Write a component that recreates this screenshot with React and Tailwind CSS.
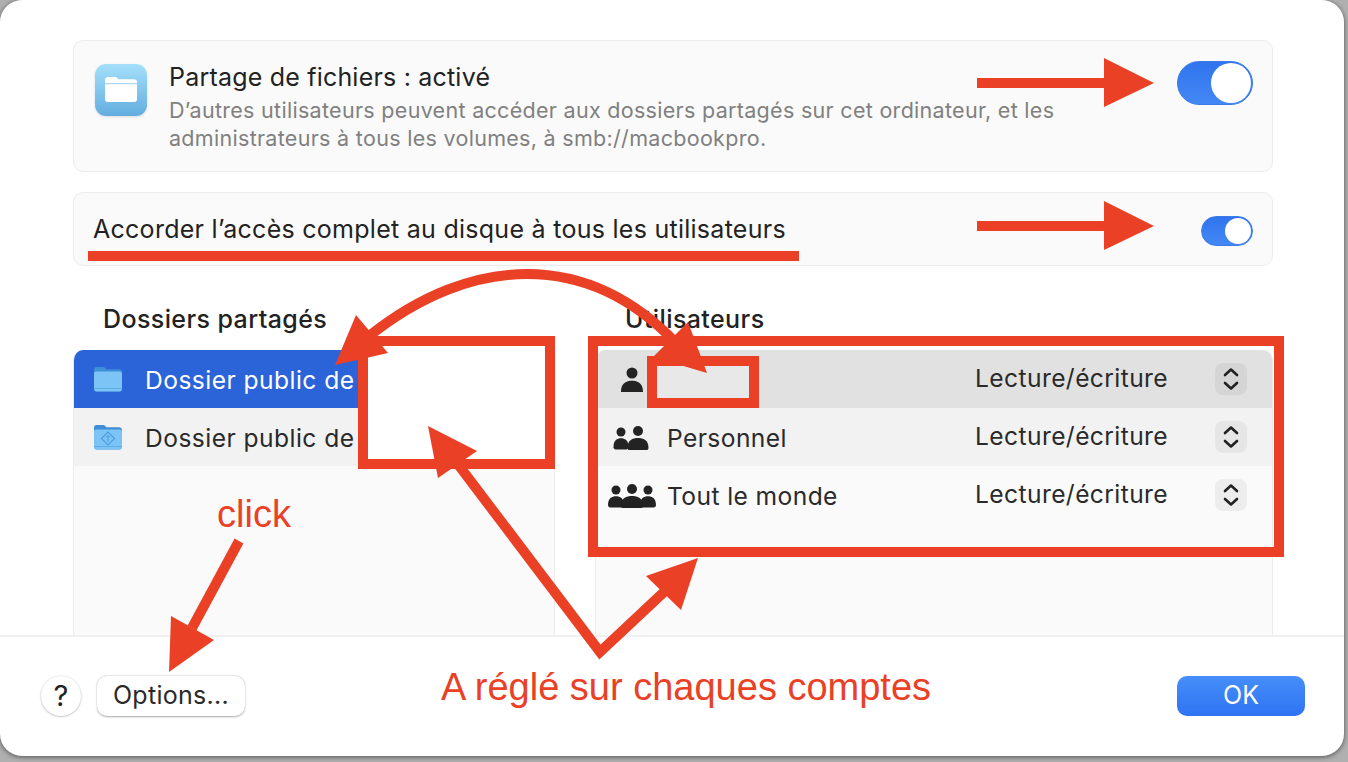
const RED = "#ea4025";

// ── toggle ──
function Toggle({ big }) {
  return (
    <div
      className={
        big
          ? "w-[76px] h-[44px] rounded-full bg-gradient-to-b from-[#2f74ee] to-[#4488f5] flex justify-end items-center pr-[1px] border border-[#3b7ce8]"
          : "w-[52px] h-[30px] rounded-full bg-gradient-to-b from-[#2f74ee] to-[#4488f5] flex justify-end items-center pr-[1px] border border-[#3b7ce8]"
      }
    >
      <div className={big ? "w-[40px] h-[40px] rounded-full bg-white" : "w-[26px] h-[26px] rounded-full bg-white"} />
    </div>
  );
}

function FolderIcon({ badge }) {
  return (
    <svg width="30" height="28" viewBox="0 0 30 28" className="shrink-0">
      <path d="M1 4.500C1 3 2 2 3.500 2h6.500c1 0 1.600.4 2.200 1l1.200 1.300H26c1.600 0 3 1.200 3 2.700V24c0 1.500-1 2.500-2.500 2.500h-23C2 26.500 1 25.500 1 24z" fill="#3f8fd6" />
      <path d="M1 8.500C1 7.400 1.800 6.500 3 6.500h24c1.200 0 2 .9 2 2V24c0 1.500-1 2.500-2.500 2.500h-23C2 26.500 1 25.500 1 24z" fill="#7cc4f5" />
      <rect x="1" y="23" width="28" height="1" fill="#5eaee8" />
      {badge && <path d="M15 9l6.500 6.500L15 22l-6.500-6.500z" fill="none" stroke="#4b9fe0" strokeWidth="1.200" />}
      {badge && <path d="M15 12.500v6M13 14.500l2-2 2 2" fill="none" stroke="#4b9fe0" strokeWidth="1" />}
    </svg>
  );
}

function Person({ cx, r, w, y }) {
  return (
    <g>
      <circle cx={cx} cy={y} r={r} fill="#232323" />
      <path d={`M${cx - w} ${y + r * 3.4}c0-${r * 1.6} ${w * 0.5}-${r * 2} ${w}-${r * 2}s${w} ${r * 0.4} ${w} ${r * 2}c0 ${r * 0.4}-${w * 0.2} ${r * 0.5}-${w * 0.4} ${r * 0.5}h-${w * 1.2}c-${w * 0.2} 0-${w * 0.4}-${r * 0.1}-${w * 0.4}-${r * 0.5}z`} fill="#232323" />
    </g>
  );
}

function UsersIcon({ count }) {
  return (
    <svg width="48" height="26" viewBox="0 0 48 26">
      {count === 1 && <Person cx={24} r={5.5} w={11} y={7} />}
      {count === 2 && (
        <>
          <Person cx={13} r={4.5} w={7.5} y={8} />
          <Person cx={30} r={5} w={10.5} y={7} />
        </>
      )}
      {count === 3 && (
        <>
          <Person cx={8} r={4.5} w={8} y={8} />
          <Person cx={40} r={4.5} w={8} y={8} />
          <Person cx={24} r={5} w={11} y={7} />
        </>
      )}
    </svg>
  );
}

function Stepper({ className }) {
  return (
    <div className={"w-[32px] h-[32px] rounded-[8px] " + className}>
      <svg width="32" height="32" viewBox="0 0 32 32" fill="none" stroke="#222" strokeWidth="2.6" strokeLinecap="round" strokeLinejoin="round">
        <path d="M10 12l6-5.500 6 5.500" />
        <path d="M10 20l6 5.500 6-5.500" />
      </svg>
    </div>
  );
}

function UserRow({ count, name, bg, stepper }) {
  return (
    <div className={"h-[58px] flex items-center " + bg}>
      <div className="w-[71px] flex justify-center">
        <UsersIcon count={count} />
      </div>
      <div className="w-[308px] text-[#2a2a2a] text-[24.6px] tracking-[0.4px] mt-[2px]">{name}</div>
      <div className="w-[240px] text-[#2a2a2a] text-[24.6px] tracking-[0.4px] -mt-[2px]">Lecture/écriture</div>
      <Stepper className={stepper} />
    </div>
  );
}

// ── annotations drawn over the dialog ──
function Annotations() {
  return (
    <svg width="1348" height="762" viewBox="0 0 1348 762" className="absolute left-0 top-0 pointer-events-none">
      <g fill={RED}>
        <path d="M977 78h127V58l50 25-50 24V88H977z" />
        <path d="M977 221h127v-20l50 25-50 24v-19H977z" />
        <rect x="88" y="251" width="711" height="10" />
        <path d="M169 672l2-56 43 24z" />
        <path d="M335 365l21-50 32 38z" />
        <path d="M707 373l-19-51-35 35z" />
        <path d="M428 426l49 25-39 27z" />
        <path d="M698 558l-52 18 35 34z" />
      </g>
      <g fill="none" stroke={RED} strokeWidth="10">
        <path d="M239 541L192 628" />
        <path d="M368 337C420 295 475 274 527 274C585 274 635 300 675 342" />
        <path d="M457 463L600 652L664 592" strokeMiterlimit="10" />
      </g>
    </svg>
  );
}

export default function App() {
  return (
    <div className="relative w-[1348px] h-[762px] overflow-hidden bg-[#b0b0b0] font-['Inter','Liberation_Sans',sans-serif]">
      {/* dialog */}
      <div className="w-[1344px] h-[756px] bg-white rounded-[22px] shadow-[0_1px_5px_rgba(0,0,0,0.55)] flex flex-col">
        <div className="flex-1 min-h-0 pl-[73px] pt-[40px] pr-[71px] flex flex-col">
          {/* sharing card */}
          <div className="h-[132px] bg-[#fafafa] border border-[#ececec] rounded-[10px] flex items-start pl-[21px] pr-[19px] pt-[18px]">
            <div className="w-[52px] h-[52px] mt-[5px] rounded-[11px] bg-gradient-to-b from-[#a5e0fb] to-[#62addf] flex items-center justify-center shadow-sm shrink-0">
              <svg width="32" height="26" viewBox="0 0 32 26">
                <path d="M0 3c0-1.600 1-3 3-3h7c1 0 1.500.3 2.200 1l1.300 1.300H29c2 0 3 1 3 3V22c0 2-1 3-3 3H3c-2 0-3-1-3-3z" fill="#fff" />
                <rect x="0" y="6" width="32" height="1.200" fill="#a8d8f5" />
              </svg>
            </div>
            <div className="ml-[22px] flex-1">
              <div className="text-[25px] leading-[36px] text-[#222] tracking-[0.2px]">Partage de fichiers : activé</div>
              <div className="text-[21.5px] leading-[28px] text-[#808080] tracking-[0.3px] mt-[1px]">
                D’autres utilisateurs peuvent accéder aux dossiers partagés sur cet ordinateur, et les
                <br />
                administrateurs à tous les volumes, à smb://macbookpro.
              </div>
            </div>
            <div className="mt-[2px]">
              <Toggle big />
            </div>
          </div>

          {/* full disk access card */}
          <div className="h-[74px] mt-[20px] bg-[#fafafa] border border-[#ececec] rounded-[10px] flex items-center justify-between pl-[19px] pr-[19px]">
            <div className="text-[25px] text-[#222] tracking-[0.27px] mt-[2px]">Accorder l’accès complet au disque à tous les utilisateurs</div>
            <div className="mt-[4px]">
              <Toggle />
            </div>
          </div>

          {/* lists */}
          <div className="flex-1 min-h-0 flex mt-[36px] gap-[40px]">
            <div className="w-[482px] flex flex-col">
              <div className="h-[48px] pl-[30px] text-[25px] font-medium text-[#222] leading-[34px] tracking-[0.4px]">Dossiers partagés</div>
              <div className="flex-1 bg-[#fafafa] border-x border-[#ececec] rounded-t-[10px] overflow-hidden">
                <div className="h-[58px] bg-[#2b63d9] flex items-center pl-[20px] -mx-[1px]">
                  <FolderIcon />
                  <span className="ml-[22px] mt-[2px] text-[24.6px] text-white tracking-[0.45px]">Dossier public de</span>
                </div>
                <div className="h-[58px] bg-[#f2f2f2] flex items-center pl-[20px] -mx-[1px]">
                  <FolderIcon badge />
                  <span className="ml-[22px] mt-[2px] text-[24.6px] text-[#2a2a2a] tracking-[0.45px]">Dossier public de</span>
                </div>
              </div>
            </div>
            <div className="flex-1 flex flex-col">
              <div className="h-[48px] pl-[30px] text-[25px] font-medium text-[#222] leading-[34px] tracking-[0.4px]">Utilisateurs</div>
              <div className="flex-1 bg-[#fafafa] border-x border-[#ececec] rounded-t-[10px] overflow-hidden">
                <UserRow count={1} name="" bg="bg-[#e1e1e1]" stepper="bg-[#d5d5d5]" />
                <UserRow count={2} name="Personnel" bg="bg-[#f2f2f2]" stepper="bg-[#e6e6e6]" />
                <UserRow count={3} name="Tout le monde" bg="bg-[#fafafa]" stepper="bg-[#ededed]" />
              </div>
            </div>
          </div>
        </div>

        {/* footer */}
        <div className="h-[121px] shrink-0 border-t-2 border-[#f0f0f0] flex items-start pl-[41px] pr-[39px] pt-[39px]">
          <div className="w-[40px] h-[40px] rounded-full bg-white shadow-[0_0.5px_2px_rgba(0,0,0,0.35)] flex items-center justify-center text-[29px] text-[#222]">?</div>
          <div className="ml-[16px] w-[148px] h-[40px] rounded-[10px] bg-white shadow-[0_0.5px_2px_rgba(0,0,0,0.35)] flex items-center justify-center text-[25px] text-[#2a2a2a] tracking-[0.3px]">Options...</div>
          <div className="ml-auto w-[128px] h-[40px] rounded-[10px] bg-gradient-to-b from-[#468ef9] to-[#2f73f3] flex items-center justify-center text-[25px] text-white">OK</div>
        </div>
      </div>

      {/* annotation boxes */}
      <div className="absolute left-[358px] top-[336px] w-[197px] h-[133px] bg-white border-[10px] border-[#ea4025]" />
      <div className="absolute left-[588px] top-[336px] w-[696px] h-[221px] border-[10px] border-[#ea4025]" />
      <div className="absolute left-[647px] top-[356px] w-[112px] h-[52px] bg-[#e8e8e8] border-[10px] border-[#ea4025]" />
      <Annotations />
      <div className="absolute left-[217px] top-[492px] text-[38px] leading-[44px] text-[#ea4025] font-['Liberation_Sans',sans-serif]">click</div>
      <div className="absolute left-[441px] top-[665px] text-[38px] leading-[44px] text-[#ea4025] font-['Liberation_Sans',sans-serif]">A réglé sur chaques comptes</div>
    </div>
  );
}
